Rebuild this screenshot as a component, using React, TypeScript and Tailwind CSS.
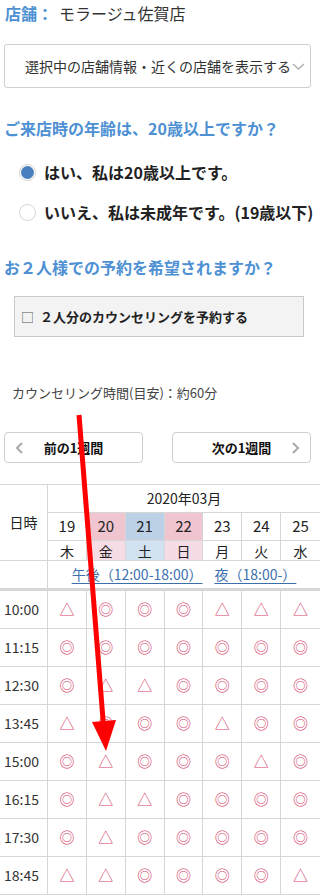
import React from "react";

const F = { fontFamily: '"Noto Sans CJK JP", "Noto Sans", sans-serif' };

const days = [
  { d: "19", w: "木", top: "", bot: "" },
  { d: "20", w: "金", top: "bg-[#f1c5cf]", bot: "bg-[#f6dce5]" },
  { d: "21", w: "土", top: "bg-[#bdd1e6]", bot: "bg-[#d3e2f1]" },
  { d: "22", w: "日", top: "bg-[#f1c5cf]", bot: "bg-[#f6dce5]" },
  { d: "23", w: "月", top: "", bot: "" },
  { d: "24", w: "火", top: "", bot: "" },
  { d: "25", w: "水", top: "", bot: "" },
];

const rows: [string, string][] = [
  ["10:00", "△◎◎◎△△△"],
  ["11:15", "◎◎◎◎◎◎◎"],
  ["12:30", "◎△△◎◎◎◎"],
  ["13:45", "△◎◎◎△◎◎"],
  ["15:00", "◎△◎◎◎△◎"],
  ["16:15", "◎△△◎◎◎◎"],
  ["17:30", "◎△◎◎◎◎◎"],
  ["18:45", "△△◎◎◎◎△"],
];

const B = "border-[#d6d6d6]";

function Chevron({ dir }: { dir: "l" | "r" }) {
  const d = dir === "l" ? "M8 2 L3 7 L8 12" : "M4 2 L9 7 L4 12";
  return (
    <svg width="12" height="14" viewBox="0 0 12 14">
      <path d={d} fill="none" stroke="#a9a9a9" strokeWidth="2" />
    </svg>
  );
}

export default function App() {
  return (
    <div className="relative w-[320px] h-[896px] overflow-hidden bg-white text-[#333]" style={F}>
      {/* store */}
      <div className="h-[26px] flex items-center pl-[5px] text-[16px]">
        <span className="font-bold text-[#4d90d3]">店舗：</span>
        <span className="ml-[6px] text-[#333]">モラージュ佐賀店</span>
      </div>
      {/* select */}
      <div className="mt-[18px] ml-[4px] w-[307px] h-[44px] border border-[#cfcfcf] rounded-[3px] flex items-center pl-[20px] text-[14px] text-[#333]">
        <span className="whitespace-nowrap">選択中の店舗情報・近くの店舗を表示する</span>
        <svg width="13" height="10" viewBox="0 0 13 10" className="ml-[1px] mt-[2px]">
          <path d="M1 2 L6.5 7 L12 2" fill="none" stroke="#b3b3b3" strokeWidth="1.6" />
        </svg>
      </div>
      {/* q1 */}
      <div className="mt-[28px] h-[24px] flex items-center pl-[4px] text-[16px] font-bold text-[#4d90d3] whitespace-nowrap">
        ご来店時の年齢は、20歳以上ですか？
      </div>
      <div className="mt-[20px] h-[24px] flex items-center pl-[19px] gap-[8px] text-[16px] font-bold text-[#222] whitespace-nowrap">
        <span className="w-[17px] h-[17px] rounded-full border border-[#d4d4d4] flex items-center justify-center shrink-0">
          <span className="w-[13px] h-[13px] rounded-full bg-[#4a80c0]" />
        </span>
        <span>はい、私は20歳以上です。</span>
      </div>
      <div className="mt-[16px] h-[24px] flex items-center pl-[19px] gap-[8px] text-[16px] font-bold text-[#222] whitespace-nowrap">
        <span className="w-[17px] h-[17px] rounded-full border border-[#d4d4d4] shrink-0 bg-white" />
        <span>いいえ、私は未成年です。(19歳以下)</span>
      </div>
      {/* q2 */}
      <div className="mt-[31px] h-[24px] flex items-center pl-[4px] text-[16px] font-bold text-[#4d90d3] whitespace-nowrap">
        お２人様での予約を希望されますか？
      </div>
      <div className="mt-[17px] ml-[14px] w-[290px] h-[41px] bg-[#f3f3f3] border border-[#c9c9c9] flex items-center pl-[6px] text-[13px] font-bold text-[#222] whitespace-nowrap">
        <span className="font-normal text-[#555] mr-[6px]">□</span>
        <span>２人分のカウンセリングを予約する</span>
      </div>
      {/* counseling time */}
      <div className="mt-[46px] h-[20px] flex items-center pl-[12px] text-[13px] text-[#444] whitespace-nowrap">
        カウンセリング時間(目安)：約60分
      </div>
      {/* week buttons */}
      <div className="mt-[29px] h-[31px] flex gap-[29px] pl-[4px]">
        <div className="w-[139px] h-[31px] border border-[#cfcfcf] rounded-[4px] flex items-center px-[9px]">
          <Chevron dir="l" />
          <span className="flex-1 text-center text-[13px] font-bold text-[#111]">前の1週間</span>
          <span className="w-[12px]" />
        </div>
        <div className="w-[139px] h-[31px] border border-[#cfcfcf] rounded-[4px] flex items-center px-[9px]">
          <span className="w-[12px]" />
          <span className="flex-1 text-center text-[13px] font-bold text-[#111]">次の1週間</span>
          <Chevron dir="r" />
        </div>
      </div>
      {/* calendar */}
      <div
        className={`mt-[21px] border-t ${B} grid grid-cols-[48px_repeat(7,minmax(0,1fr))] grid-rows-[28px_28px_20px_30px_repeat(8,38px)] text-[#222]`}
      >
        <div className={`row-span-3 border-r border-b ${B} flex items-center justify-center text-[14px]`}>
          日時
        </div>
        <div className={`col-span-7 border-b ${B} flex items-center justify-center text-[14px]`}>
          2020年03月
        </div>
        {days.map((d, i) => (
          <div
            key={"d" + i}
            className={`${i < 6 ? "border-r" : ""} border-b ${B} ${d.top} flex items-center justify-center text-[15px]`}
          >
            {d.d}
          </div>
        ))}
        {days.map((d, i) => (
          <div
            key={"w" + i}
            className={`${i < 6 ? "border-r" : ""} border-b ${B} ${d.bot} flex items-center justify-center text-[14px] leading-none`}
          >
            {d.w}
          </div>
        ))}
        <div className={`border-r border-b-[3px] ${B}`} />
        <div className={`col-span-7 border-b-[3px] ${B} flex items-center justify-center gap-[12px] text-[14px] text-[#3b70ad] whitespace-nowrap`}>
          <span className="underline underline-offset-[3px]">午後（12:00-18:00）</span>
          <span className="underline underline-offset-[3px]">夜（18:00-）</span>
        </div>
        {rows.map(([t, s]) => (
          <React.Fragment key={t}>
            <div className={`border-r border-b ${B} flex items-center pl-[4px] text-[14px] text-[#333]`}>{t}</div>
            {Array.from(s).map((c, i) => (
              <div
                key={t + i}
                className={`${i < 6 ? "border-r" : ""} border-b ${B} flex items-center justify-center text-[15px] text-[#d4426a]`}
              >
                {c}
              </div>
            ))}
          </React.Fragment>
        ))}
      </div>
      {/* red arrow overlay */}
      <svg
        className="absolute left-0 top-0 pointer-events-none"
        width="320"
        height="896"
        viewBox="0 0 320 896"
      >
        <line x1="79" y1="415" x2="103.5" y2="726" stroke="#ff0000" strokeWidth="5" />
        <polygon points="92,722 116,720 106,751" fill="#ff0000" />
      </svg>
    </div>
  );
}
